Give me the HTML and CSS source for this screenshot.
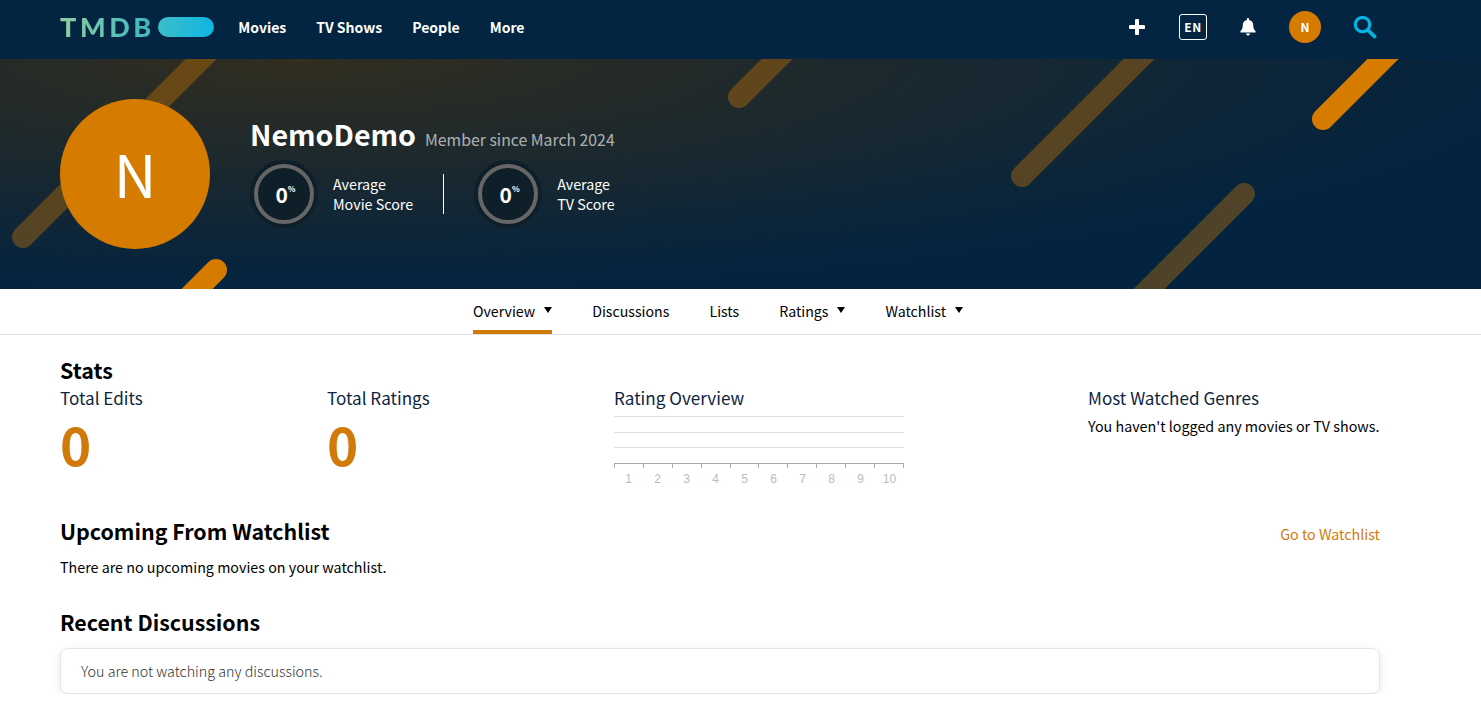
FILE: index.html

```html
<!DOCTYPE html>
<html lang="en">
<head>
  <meta charset="UTF-8" />
  <meta name="viewport" content="width=device-width, initial-scale=1.0" />
  <title>NemoDemo – TMDB</title>
  <link rel="stylesheet" href="styles.css">
</head>
<body>
  <header class="topbar">
    <div class="logo">
      <span class="logo-text">TMDB</span>
      <span class="logo-pill"></span>
    </div>
    <nav class="mainnav">
      <a>Movies</a>
      <a>TV Shows</a>
      <a>People</a>
      <a>More</a>
    </nav>
    <div class="topbar-icons">
      <svg class="icon-plus" width="16" height="16" viewBox="0 0 16 16"><path d="M8 1.5v13M1.5 8h13" stroke="#fff" stroke-width="4" stroke-linecap="round"/></svg>
      <span class="lang">EN</span>
      <svg class="icon-bell" width="16" height="18" viewBox="0 0 16 18"><path d="M8 0a1.2 1.2 0 0 0-1.2 1.2v.7C4.300 2.400 2.800 4.400 2.800 7c0 3.600-1 4.700-2.300 6.200-.5.600-.2 1.400.6 1.400h13.800c.8 0 1.100-.8.6-1.400C14.200 11.700 13.200 10.600 13.200 7c0-2.600-1.500-4.600-4-5.100v-.7A1.200 1.200 0 0 0 8 0zM6 15.600a2 2 0 0 0 4 0z" fill="#fff"/></svg>
      <span class="avatar-small">N</span>
      <svg class="icon-search" width="24" height="24" viewBox="0 0 24 24"><circle cx="9.500" cy="9.500" r="7.200" fill="none" stroke="#01b4e4" stroke-width="3.200"/><path d="M15 15l6.500 6.500" stroke="#01b4e4" stroke-width="3.800" stroke-linecap="round"/></svg>
    </div>
  </header>

  <section class="hero">
    <svg class="hero-stripes" width="1481" height="230" viewBox="0 59 1481 230">
      <g fill="none" stroke-width="22" stroke-linecap="round" stroke="#d57b00">
        <path class="faded" d="M23 237L223 37"/>
        <path d="M216 270L180 306"/>
        <path class="faded" d="M739 97L790 46"/>
        <path class="faded" d="M1022 176L1150 48"/>
        <path d="M1323 119L1395 47"/>
        <path class="faded" d="M1244 194L1130 308"/>
      </g>
    </svg>
    <div class="hero-avatar">N</div>
    <div class="hero-info">
      <div class="hero-title">
        <h1>NemoDemo</h1>
        <span class="member">Member since March 2024</span>
      </div>
      <div class="scores">
        <div class="score">
          <div class="ring"><div class="ring-inner">0<sup>%</sup></div></div>
          <div class="score-label">Average<br>Movie Score</div>
        </div>
        <div class="score-divider"></div>
        <div class="score">
          <div class="ring"><div class="ring-inner">0<sup>%</sup></div></div>
          <div class="score-label">Average<br>TV Score</div>
        </div>
      </div>
    </div>
  </section>

  <nav class="tabs">
    <a class="tab active">Overview<span class="caret"></span></a>
    <a class="tab">Discussions</a>
    <a class="tab">Lists</a>
    <a class="tab">Ratings<span class="caret"></span></a>
    <a class="tab">Watchlist<span class="caret"></span></a>
  </nav>

  <main class="content">
    <h2 class="stats-title">Stats</h2>
    <div class="stats">
      <div>
        <h3>Total Edits</h3>
        <div class="big-number">0</div>
      </div>
      <div>
        <h3>Total Ratings</h3>
        <div class="big-number">0</div>
      </div>
      <div class="rating-overview">
        <h3>Rating Overview</h3>
        <div class="chart">
          <div class="chart-lines"></div>
          <div class="chart-axis">
            <span>1</span><span>2</span><span>3</span><span>4</span><span>5</span>
            <span>6</span><span>7</span><span>8</span><span>9</span><span>10</span>
          </div>
        </div>
      </div>
      <div>
        <h3>Most Watched Genres</h3>
        <p class="genres-empty">You haven't logged any movies or TV shows.</p>
      </div>
    </div>

    <div class="section-head upcoming">
      <h2>Upcoming From Watchlist</h2>
      <a class="watchlist-link">Go to Watchlist</a>
    </div>
    <p class="upcoming-empty">There are no upcoming movies on your watchlist.</p>

    <h2 class="recent-title">Recent Discussions</h2>
    <div class="card">You are not watching any discussions.</div>
  </main>
</body>
</html>
```

FILE: styles.css

```css
* {
  box-sizing: border-box;
}

body {
  margin: 0;
  font-family: "Noto Sans CJK SC", "Noto Sans", sans-serif;
  font-size: 14.300px;
  color: #000;
  background: #fff;
}

h1, h2, h3, p {
  margin: 0;
}

.topbar {
  display: flex;
  align-items: center;
  height: 59px;
  padding: 0 104px 5px 60px;
  background: #032541;
}

.logo {
  display: flex;
  align-items: center;
  gap: 7px;
  margin-right: 24px;
}

.logo-text {
  font-family: "Lato", sans-serif;
  font-size: 27px;
  line-height: 30px;
  font-weight: 900;
  letter-spacing: 3.600px;
  margin-right: -3.600px;
  background: linear-gradient(to right, #90cea1, #3cb6c4);
  -webkit-background-clip: text;
  background-clip: text;
  color: transparent;
}

.logo-pill {
  width: 56px;
  height: 20px;
  border-radius: 10px;
  background: linear-gradient(to right, #3cbec9, #0fb5e2);
}

.mainnav {
  display: flex;
  gap: 30px;
}

.mainnav a {
  color: #fff;
  font-weight: 700;
  font-size: 14px;
  line-height: 24px;
}

.topbar-icons {
  display: flex;
  align-items: center;
  margin-left: auto;
}

.icon-plus {
  margin-right: 34px;
}

.lang {
  width: 28px;
  height: 26px;
  border: 1px solid #fff;
  border-radius: 3px;
  color: #fff;
  font-size: 12px;
  font-weight: 700;
  line-height: 24px;
  letter-spacing: 0.500px;
  text-align: center;
  margin-right: 33px;
}

.icon-bell {
  margin-right: 33px;
}

.avatar-small {
  width: 32px;
  height: 32px;
  border-radius: 50%;
  background: #d57b00;
  color: #fff;
  font-size: 12px;
  font-weight: 700;
  line-height: 32px;
  text-align: center;
  margin-right: 32px;
}

.hero {
  position: relative;
  display: flex;
  align-items: center;
  gap: 40px;
  height: 230px;
  padding-left: 60px;
  overflow: hidden;
  background:
    radial-gradient(ellipse 1250px 230px at 300px 0, rgba(95, 56, 0, 0.5), rgba(95, 56, 0, 0) 100%),
    #03233f;
}

.hero-stripes {
  position: absolute;
  top: 0;
  left: 0;
}

.hero-stripes .faded {
  opacity: 0.36;
}

.hero-avatar {
  position: relative;
  width: 150px;
  height: 150px;
  border-radius: 50%;
  background: #d57b00;
  color: #fff;
  font-size: 59px;
  line-height: 148px;
  text-align: center;
}

.hero-info {
  position: relative;
  margin-top: -5px;
}

.hero-title {
  display: flex;
  align-items: baseline;
  gap: 9px;
  margin-bottom: 7px;
}

.hero-title h1 {
  color: #fff;
  font-size: 28.600px;
  line-height: 38px;
  font-weight: 700;
}

.member {
  color: rgba(255, 255, 255, 0.65);
  font-size: 15.800px;
  line-height: 24px;
}

.scores {
  display: flex;
  align-items: center;
}

.score {
  display: flex;
  align-items: center;
  gap: 15px;
}

.ring {
  display: flex;
  align-items: center;
  justify-content: center;
  width: 68px;
  height: 68px;
  border-radius: 50%;
  background: #0e1f2a;
}

.ring-inner {
  display: flex;
  align-items: center;
  justify-content: center;
  width: 60px;
  height: 60px;
  padding-left: 3px;
  border: 4px solid #666;
  border-radius: 50%;
  color: #fff;
  font-size: 21px;
  font-weight: 700;
  line-height: 24px;
}

.ring-inner sup {
  font-size: 8px;
  line-height: 8px;
  align-self: flex-start;
  margin-top: 17px;
}

.score-label {
  color: #fff;
  font-size: 14.300px;
  line-height: 20px;
}

.score-divider {
  width: 1px;
  height: 40px;
  margin: 0 30px;
  background: #fff;
}

.tabs {
  display: flex;
  justify-content: center;
  gap: 40px;
  height: 46px;
  padding-right: 45px;
  border-bottom: 1px solid #e3e3e3;
}

.tab {
  display: flex;
  align-items: center;
  height: 45px;
  padding-top: 2px;
  font-size: 14.200px;
  color: #000;
  border-bottom: 4px solid transparent;
}

.tab.active {
  border-bottom-color: #d17a0a;
}

.caret {
  width: 0;
  height: 0;
  margin: 0 0 2px 9px;
  border-left: 4.500px solid transparent;
  border-right: 4.500px solid transparent;
  border-top: 6px solid #000;
}

.content {
  width: 1320px;
  margin-left: 60px;
}

.content h2 {
  font-size: 21.400px;
  line-height: 30px;
  font-weight: 700;
}

.stats-title {
  padding-top: 20px;
  margin-bottom: 1px;
}

.stats {
  display: grid;
  grid-template-columns: 267px 287px 474px 292px;
  height: 124px;
}

.stats h3 {
  color: #0d253f;
  font-size: 17.100px;
  font-weight: 400;
  line-height: 24px;
}

.big-number {
  color: #d17a0a;
  font-size: 53px;
  font-weight: 700;
  line-height: 66px;
}

.chart {
  width: 290px;
  margin-top: 6px;
}

.chart-lines {
  height: 47px;
  border-top: 1px solid #e0e0e0;
  background: linear-gradient(#e0e0e0, #e0e0e0) 0 15px / 100% 1px no-repeat,
    linear-gradient(#e0e0e0, #e0e0e0) 0 30px / 100% 1px no-repeat;
}

.chart-axis {
  display: grid;
  grid-template-columns: repeat(10, 1fr);
  height: 22px;
  border-top: 1px solid #aaa;
  background: repeating-linear-gradient(to right, #aaa 0, #aaa 1px, transparent 1px, transparent 28.900px) 0 0 / 100% 4px no-repeat;
}

.chart-axis span {
  padding-top: 8px;
  color: #bbb;
  font-family: "Liberation Sans", sans-serif;
  font-size: 12px;
  line-height: 14px;
  text-align: center;
}

.genres-empty {
  margin-top: 4px;
  line-height: 24px;
}

.section-head {
  display: flex;
  justify-content: space-between;
  align-items: flex-end;
}

.upcoming {
  padding-top: 6px;
}

.watchlist-link {
  color: #d17a0a;
  line-height: 24px;
}

.upcoming-empty {
  margin-top: 9px;
  line-height: 24px;
}

.recent-title {
  margin-top: 28px;
}

.card {
  height: 46px;
  margin-top: 11px;
  padding: 0 20px;
  border: 1px solid #e3e3e3;
  border-radius: 8px;
  box-shadow: 0 2px 8px rgba(0, 0, 0, 0.1);
  color: #333;
  font-weight: 300;
  line-height: 44px;
}
```
